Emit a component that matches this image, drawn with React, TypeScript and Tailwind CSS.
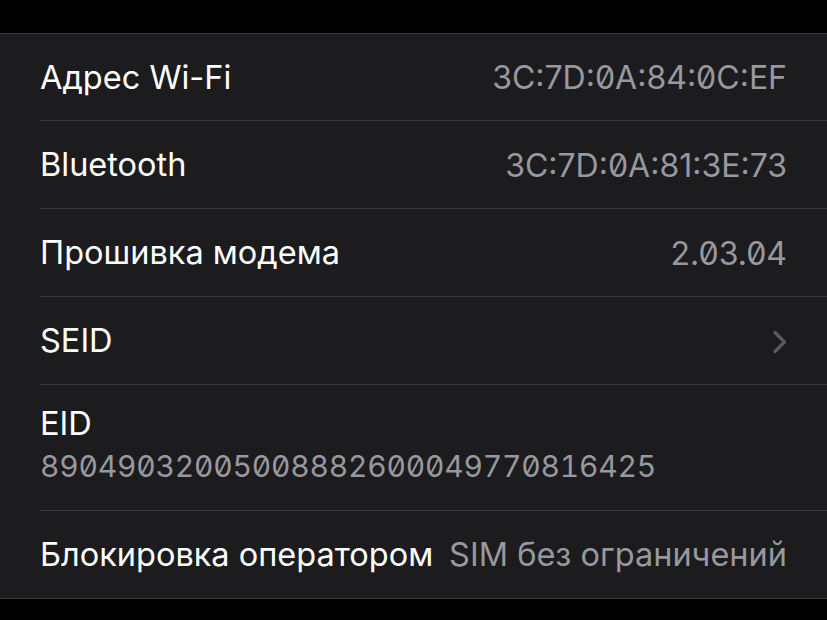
const rows = [
  { label: "Адрес Wi-Fi", value: "3C:7D:0A:84:0C:EF" },
  { label: "Bluetooth", value: "3C:7D:0A:81:3E:73" },
  { label: "Прошивка модема", value: "2.03.04" },
]

function Chevron() {
  return (
    <svg width="16" height="26" viewBox="0 0 16 26" fill="none" className="-mr-[1px]">
      <path d="M3 3.5 L12.5 13 L3 22.5" stroke="#5a5a5f" strokeWidth="3.2" strokeLinecap="round" strokeLinejoin="round" />
    </svg>
  )
}

function Row({ label, value, chevron, h }: { label: string; value?: string; chevron?: boolean; h: string }) {
  return (
    <div className="pl-10">
      <div className={`${h} flex items-center justify-between pr-10 pt-[2px] border-b border-[#38383a]`}>
        <span className="text-white">{label}</span>
        {value && <span className="text-[#98989f] text-[32px] [font-feature-settings:'zero']">{value}</span>}
        {chevron && <Chevron />}
      </div>
    </div>
  )
}

export default function App() {
  return (
    <div className="w-[827px] h-[620px] bg-black pt-[33px] overflow-hidden" style={{ fontFamily: "Inter, 'Noto Sans', sans-serif" }}>
      <div className="bg-[#1c1c1e] border-y border-[#38383a] text-[32.5px]">
        {rows.map((r, i) => (
          <Row key={r.label} label={r.label} value={r.value} h={i === 0 ? "h-[87px]" : "h-[88px]"} />
        ))}
        <Row label="SEID" chevron h="h-[88px]" />
        <div className="pl-10">
          <div className="h-[126px] flex flex-col justify-center border-b border-[#38383a] pr-10">
            <span className="text-white leading-[40px] -mt-[4px]">EID</span>
            <span className="text-[#98989f] text-[30px] leading-[44px] tracking-[-0.2px] [font-feature-settings:'zero','tnum']">89049032005008882600049770816425</span>
          </div>
        </div>
        <div className="pl-10">
          <div className="h-[87px] flex items-center justify-between pr-10 pt-[2px]">
            <span className="text-white">Блокировка оператором</span>
            <span className="text-[#98989f]">SIM без ограничений</span>
          </div>
        </div>
      </div>
    </div>
  )
}
